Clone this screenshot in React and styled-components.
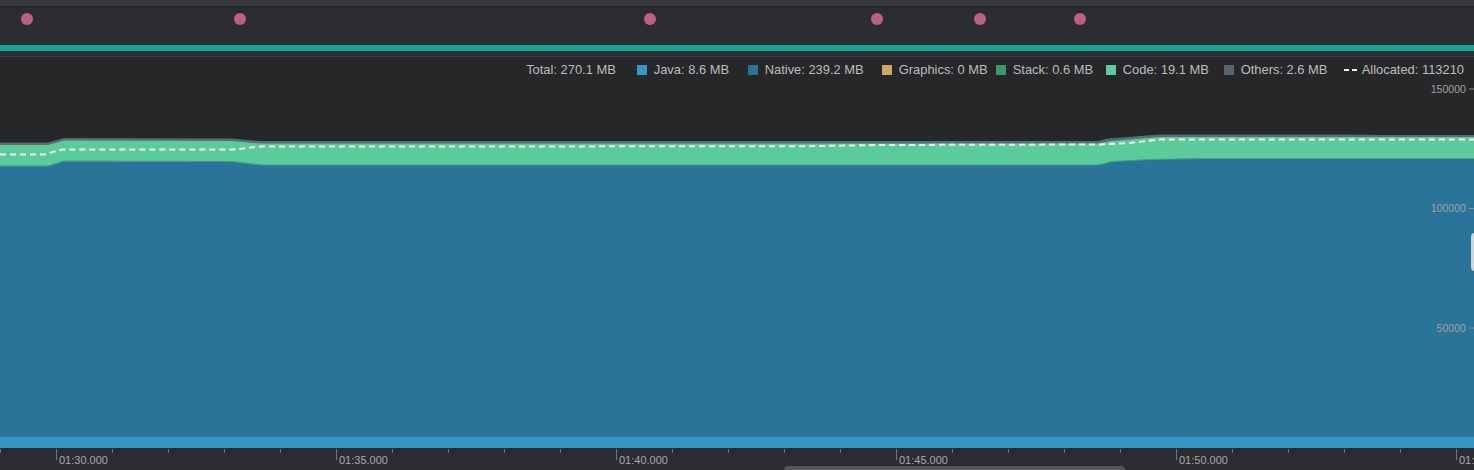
import React from "react";
import styled, { createGlobalStyle } from "styled-components";

const GlobalStyle = createGlobalStyle`
  html, body {
    margin: 0;
    padding: 0;
    background: #262729;
    overflow: hidden;
  }
  body {
    font-family: "Liberation Sans", Arial, sans-serif;
  }
`;

// page-space coordinates, chart spans y 57..448
const nativeTop = [[0, 166], [48, 166], [64, 161], [232, 161.5], [262, 165], [1098, 165], [1112, 161.5], [1150, 159.5], [1200, 158.5], [1474, 158.5]];
const codeTop = [[0, 145], [48, 145], [64, 140.5], [232, 141], [260, 143.5], [1098, 143.5], [1112, 141], [1160, 137], [1474, 137]];
const othersTop = [[0, 142.5], [48, 142.5], [64, 138], [232, 138.5], [260, 141], [1098, 141], [1108, 138.5], [1160, 134.5], [1350, 134.5], [1380, 135], [1474, 135]];
const allocated = [[0, 154.5], [44, 154.5], [62, 149.5], [235, 149.5], [258, 146.5], [800, 146.3], [880, 145], [1100, 144.5], [1130, 143], [1158, 139.5], [1474, 139.5]];

const BOTTOM = 448;

const area = (pts) =>
  "M" + pts.map((p) => p.join(",")).join(" L") + ` L1474,${BOTTOM} L0,${BOTTOM} Z`;
const line = (pts) => "M" + pts.map((p) => p.join(",")).join(" L");

const valueToY = (v) => 447.5 - (v / 50000) * 119.5;

const events = [27, 240, 650, 877, 980, 1080];

// width = swatch start to next swatch start
const legend = [
  { label: "Java: 8.6 MB", color: "#3497c7", width: 111 },
  { label: "Native: 239.2 MB", color: "#2d7399", width: 134 },
  { label: "Graphics: 0 MB", color: "#cfa466", width: 114 },
  { label: "Stack: 0.6 MB", color: "#389a6b", width: 110 },
  { label: "Code: 19.1 MB", color: "#5dcb9a", width: 118 },
  { label: "Others: 2.6 MB", color: "#576570", width: 120 },
];

const ticks = Array.from({ length: 27 }, (_, i) => {
  const major = i % 5 === 1;
  const sec = 30 + ((i - 1) / 5) * 5;
  return { major, label: major ? `01:${sec}.000` : null };
});

function App() {
  return (
    <>
      <GlobalStyle />
      <Page>
        <TopStrip />
        <EventRow>
          {events.map((x) => (
            <EventDot key={x} style={{ left: x - 6 }} />
          ))}
        </EventRow>
        <StateBar />
        <Spacer />
        <ChartArea>
          <Plot viewBox="0 57 1474 391" preserveAspectRatio="none">
            <path d={area(othersTop)} fill="#5a6b78" />
            <path d={area(codeTop)} fill="#5ccb9b" />
            <path d={area(nativeTop)} fill="#2b7499" />
            <path d={line(nativeTop)} fill="none" stroke="#45a27a" strokeWidth="1.2" />
            <rect x="0" y="437" width="1474" height="11" fill="#3596c6" />
            <path d={line(allocated)} fill="none" stroke="#f2f2f2" strokeWidth="2" strokeDasharray="6 4" />
            {[150000, 100000, 50000].map((v) => (
              <g key={v}>
                <line x1="1469" x2="1474" y1={valueToY(v)} y2={valueToY(v)} stroke="#8c8d90" strokeWidth="1" />
                <AxisText x="1466" y={valueToY(v) + 3.8} textAnchor="end">
                  {v}
                </AxisText>
              </g>
            ))}
          </Plot>
          <Legend>
            <TotalText>Total: 270.1 MB</TotalText>
            {legend.map((l) => (
              <LegendItem key={l.label} $width={l.width}>
                <Swatch $color={l.color} />
                <LegendText>{l.label}</LegendText>
              </LegendItem>
            ))}
            <LegendItem $gap={5}>
              <DashIcon>
                <span />
                <span />
              </DashIcon>
              <LegendText>Allocated: 113210</LegendText>
            </LegendItem>
          </Legend>
          <SideHandle />
        </ChartArea>
        <TimeAxis>
          {ticks.map((t, i) => (
            <Tick key={i} $major={t.major}>
              {t.label && <TickLabel>{t.label}</TickLabel>}
            </Tick>
          ))}
          <ScrollThumb />
        </TimeAxis>
      </Page>
    </>
  );
}

export default App;

const Page = styled.div`
  width: 1474px;
  height: 470px;
  display: flex;
  flex-direction: column;
  overflow: hidden;
`;

const TopStrip = styled.div`
  height: 6px;
  background: #38393c;
  border-bottom: 1px solid #222326;
`;

const EventRow = styled.div`
  position: relative;
  height: 38px;
  background: #2b2c2f;
`;

const EventDot = styled.div`
  position: absolute;
  top: 6px;
  width: 12px;
  height: 12px;
  border-radius: 50%;
  background: #bd6089;
`;

const StateBar = styled.div`
  height: 6px;
  background: #13a694;
`;

const Spacer = styled.div`
  height: 5px;
  background: #2b2c2f;
  border-bottom: 1px solid #3a3b3e;
`;

const ChartArea = styled.div`
  position: relative;
  height: 391px;
  background: #262729;
`;

const Plot = styled.svg`
  position: absolute;
  inset: 0;
  width: 100%;
  height: 100%;
  display: block;
`;

const AxisText = styled.text`
  font-family: "Liberation Sans", Arial, sans-serif;
  font-size: 10.6px;
  fill: #a0a1a3;
`;

const Legend = styled.div`
  position: relative;
  display: flex;
  justify-content: flex-end;
  align-items: center;
  padding: 5px 10px 0 0;
  height: 16px;
`;

const LegendItem = styled.div`
  display: flex;
  align-items: center;
  gap: ${(p) => p.$gap ?? 7}px;
  flex: 0 0 ${(p) => (p.$width ? `${p.$width}px` : "auto")};
`;

const LegendText = styled.span`
  font-size: 12.9px;
  line-height: 16px;
  color: #bcbdbf;
  white-space: nowrap;
`;

const TotalText = styled(LegendText)`
  margin-right: 21px;
`;

const Swatch = styled.span`
  flex: 0 0 10px;
  height: 10px;
  background: ${(p) => p.$color};
`;

const DashIcon = styled.span`
  display: flex;
  gap: 3px;
  span {
    width: 5px;
    height: 2px;
    background: #f4f4f4;
  }
`;

const SideHandle = styled.div`
  position: absolute;
  right: -5px;
  top: 176px;
  width: 8px;
  height: 38px;
  border-radius: 4px;
  background: #d3d3d3;
`;

const TimeAxis = styled.div`
  position: relative;
  flex: 1;
  display: flex;
  background: #2b2c2f;
  overflow: hidden;
`;

const Tick = styled.div`
  position: relative;
  flex: 0 0 56px;
  height: 100%;
  &::before {
    content: "";
    position: absolute;
    left: 0;
    top: 1px;
    width: 1px;
    height: ${(p) => (p.$major ? "11px" : "4px")};
    background: #727376;
  }
`;

const TickLabel = styled.span`
  position: absolute;
  left: 3px;
  top: 6px;
  font-size: 11px;
  line-height: 12px;
  color: #a9aaac;
  white-space: nowrap;
`;

const ScrollThumb = styled.div`
  position: absolute;
  left: 784px;
  bottom: 0;
  width: 341px;
  height: 4px;
  border-radius: 4px 4px 0 0;
  background: #55575a;
`;
